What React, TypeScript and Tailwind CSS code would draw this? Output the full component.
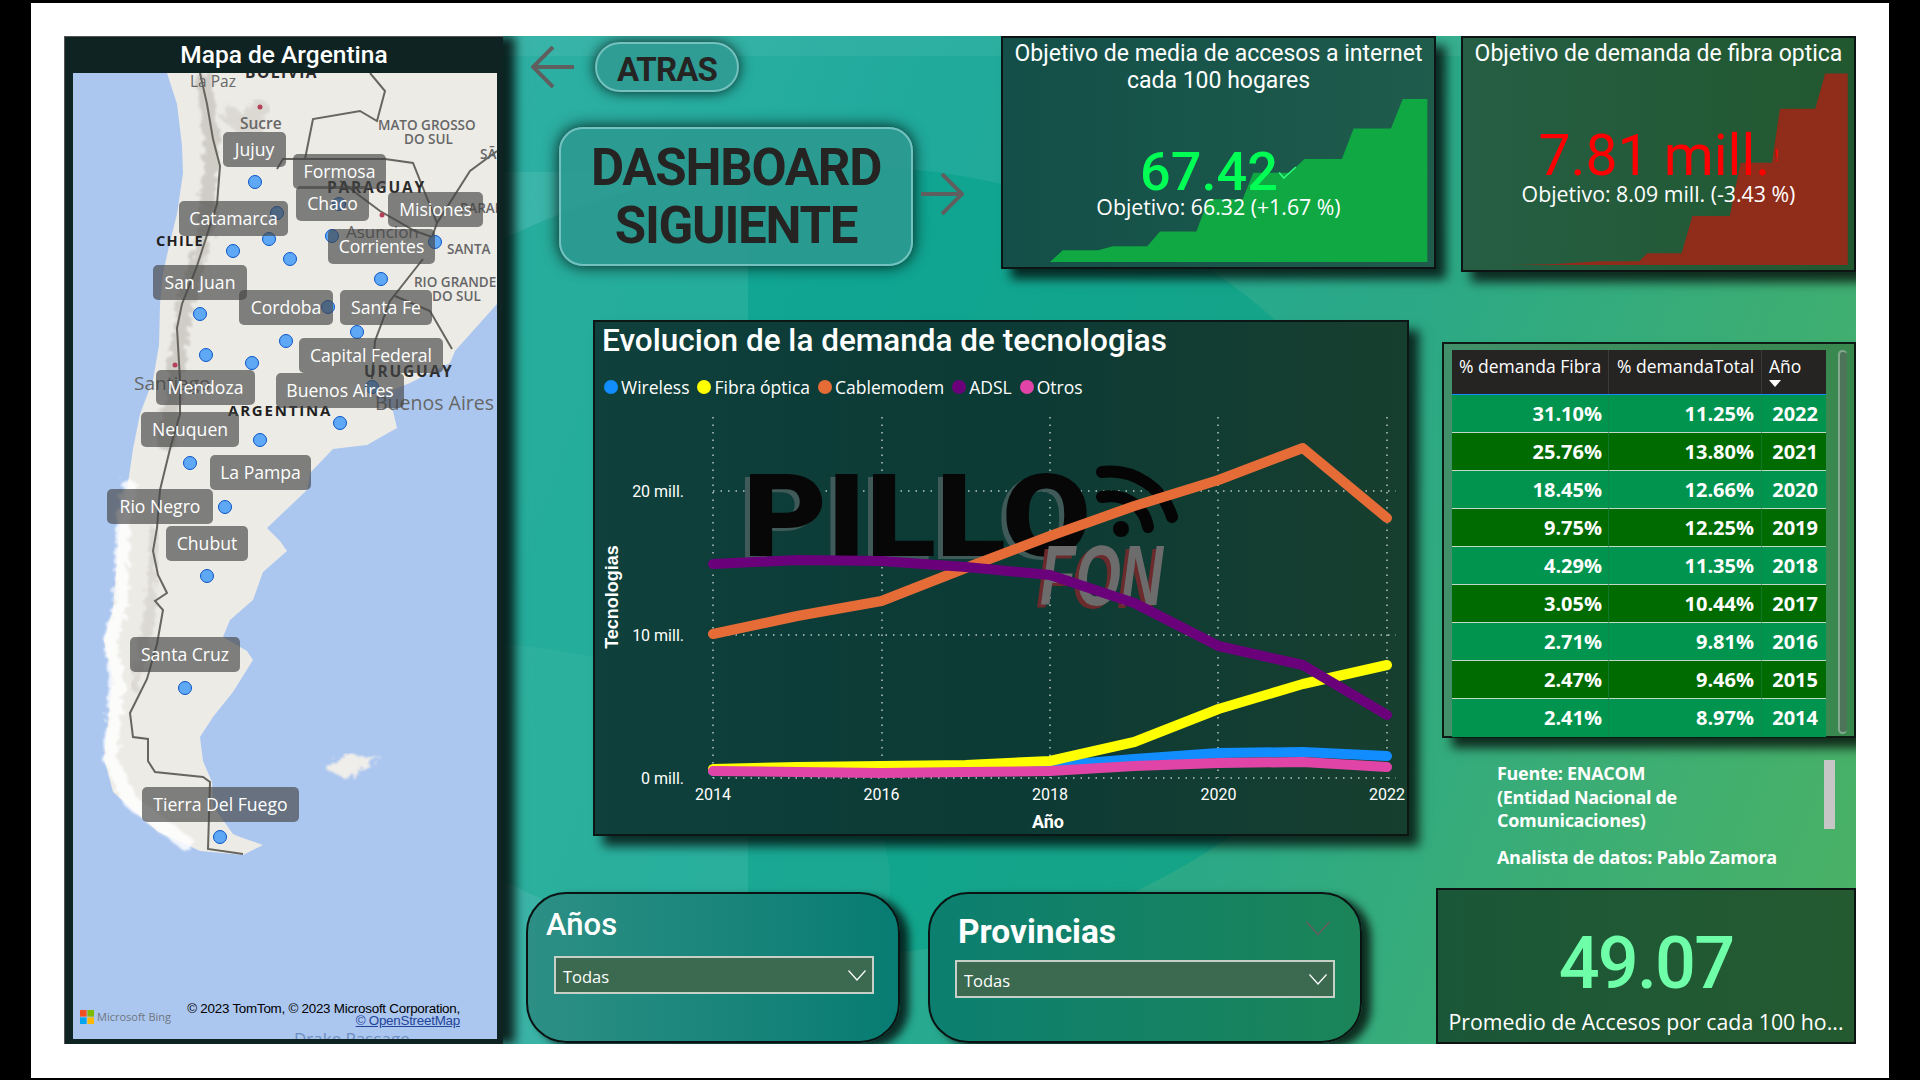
import React from 'react';

const pins: [number, number][] = [
  [255, 181], [277, 212], [339, 203], [269, 238], [233, 250], [332, 235], [290, 258], [435, 241],
  [381, 278], [200, 313], [328, 306], [357, 331], [286, 340], [206, 354], [252, 362], [372, 386],
  [340, 422], [260, 439], [190, 462], [225, 506], [207, 575], [185, 687], [220, 836],
];

// x, y, w of each province label, in page pixels
const labels: { name: string; x: number; y: number; w: number }[] = [
  { name: 'Jujuy', x: 223, y: 131, w: 63 },
  { name: 'Formosa', x: 293, y: 153, w: 93 },
  { name: 'Chaco', x: 296, y: 185, w: 73 },
  { name: 'Catamarca', x: 179, y: 200, w: 109 },
  { name: 'Misiones', x: 388, y: 191, w: 95 },
  { name: 'Corrientes', x: 328, y: 228, w: 107 },
  { name: 'San Juan', x: 153, y: 264, w: 94 },
  { name: 'Cordoba', x: 239, y: 289, w: 94 },
  { name: 'Santa Fe', x: 340, y: 289, w: 92 },
  { name: 'Capital Federal', x: 299, y: 337, w: 144 },
  { name: 'Mendoza', x: 156, y: 369, w: 99 },
  { name: 'Buenos Aires', x: 276, y: 372, w: 128 },
  { name: 'Neuquen', x: 141, y: 411, w: 98 },
  { name: 'La Pampa', x: 210, y: 454, w: 101 },
  { name: 'Rio Negro', x: 107, y: 488, w: 106 },
  { name: 'Chubut', x: 166, y: 525, w: 82 },
  { name: 'Santa Cruz', x: 130, y: 636, w: 110 },
  { name: 'Tierra Del Fuego', x: 142, y: 786, w: 157 },
];

const land =
  '167,72 177,103 182,145 183,172 177,213 170,241 163,272 160,303 159,344 153,379 140,413 133,448 127,489 120,527 117,561 113,609 104,640 113,678 104,757 113,791 157,830 200,850 243,854 263,844 240,836 233,833 213,805 212,781 203,760 200,736 213,716 233,691 253,659 247,650 223,636 230,619 253,599 263,571 287,550 280,540 267,527 307,489 310,472 333,448 367,444 397,427 393,410 375,396 410,382 450,362 455,350 497,303 497,72';

const border =
  '200,72 207,103 213,138 220,165 217,203 207,234 197,265 182,303 177,327 180,379 180,413 170,448 160,489 157,527 153,550 158,574 167,592 155,600 163,609 157,643 147,678 135,702 130,712 133,736 148,738 148,760 155,771 203,776 210,781 208,848 243,853';

const lineX = (i: number) => 713 + i * 84.25;
const series: { color: string; ys: number[] }[] = [
  { color: '#118dff', ys: [771, 771, 771, 770, 766, 759, 753, 752, 756] },
  { color: '#ffff00', ys: [769, 767, 766, 765, 761, 742, 709, 684, 665] },
  { color: '#e66c37', ys: [634, 616, 601, 568, 536, 506, 480, 448, 518] },
  { color: '#6b007b', ys: [564, 560, 561, 567, 575, 603, 646, 665, 715] },
  { color: '#e044a7', ys: [771, 772, 773, 772, 771, 766, 763, 762, 767] },
];

const legend = [
  { name: 'Wireless', color: 'bg-[#118dff]' },
  { name: 'Fibra óptica', color: 'bg-[#ffff00]' },
  { name: 'Cablemodem', color: 'bg-[#e66c37]' },
  { name: 'ADSL', color: 'bg-[#6b007b]' },
  { name: 'Otros', color: 'bg-[#e044a7]' },
];

const rows = [
  ['31.10%', '11.25%', '2022'],
  ['25.76%', '13.80%', '2021'],
  ['18.45%', '12.66%', '2020'],
  ['9.75%', '12.25%', '2019'],
  ['4.29%', '11.35%', '2018'],
  ['3.05%', '10.44%', '2017'],
  ['2.71%', '9.81%', '2016'],
  ['2.47%', '9.46%', '2015'],
  ['2.41%', '8.97%', '2014'],
];

const din = '[font-family:Roboto,sans-serif]';
const segoe = "[font-family:'Open_Sans',sans-serif]";

const MapBase: React.FC = () => (
  <svg viewBox="73 72 424 966" className="absolute inset-0 w-full h-full">
    <defs>
      <filter id="rough" x="-20%" y="-5%" width="140%" height="110%">
        <feTurbulence type="fractalNoise" baseFrequency="0.14" numOctaves="3" seed="4" />
        <feDisplacementMap in="SourceGraphic" scale="14" />
        <feGaussianBlur stdDeviation="0.8" />
      </filter>
    </defs>
    <rect x="73" y="72" width="424" height="966" fill="#abc6ef" />
    <polygon points={land} fill="#ecebe6" />
    <polygon points="327,765 345,755 380,754 362,770 350,778 330,772" fill="#f0eeea" filter="url(#rough)" />
    <polyline points="130,480 124,527 120,609 110,640 118,678 110,757 130,800 190,845" fill="none" stroke="#ffffff" strokeWidth="14" opacity="0.85" filter="url(#rough)" />
    <polyline points="203,72 212,138 205,234 185,303 175,379 165,448" fill="none" stroke="#bdbab2" strokeWidth="16" opacity="0.6" filter="url(#rough)" />
    <polyline points="155,527 150,609 135,690" fill="none" stroke="#d5d2cb" strokeWidth="10" opacity="0.7" filter="url(#rough)" />
    <polyline points="225,110 250,130 262,100" fill="none" stroke="#cfccc5" strokeWidth="18" opacity="0.55" filter="url(#rough)" />
    <g fill="none" stroke="#66665f" strokeWidth="2">
      <polyline points={border} />
      <polyline points="277,168 283,158 305,158 313,118 360,110 377,120 385,90 370,72" />
      <polyline points="305,158 385,158 413,162 425,192 437,222 432,236 415,230 380,210 360,195 340,180" />
      <polyline points="437,222 470,170 497,150" />
      <polyline points="423,258 390,300 375,340 372,378" />
      <polyline points="395,295 430,310 452,348" />
    </g>
    <circle cx="260" cy="106" r="2.5" fill="#b5405a" />
    <circle cx="382" cy="214" r="2.5" fill="#b5405a" />
    <circle cx="175" cy="364" r="2.5" fill="#b5405a" />
    <g className="[font-family:'Open_Sans',sans-serif]" fill="#666666" fontSize="15.5">
      <text x="190" y="86">La Paz</text>
      <text x="245" y="77" fontWeight="700" fill="#2c2c2c" letterSpacing="1.5">BOLIVIA</text>
      <text x="240" y="128" fontWeight="600">Sucre</text>
      <text x="378" y="129" fontSize="13.5" fontWeight="600">MATO GROSSO</text>
      <text x="404" y="143" fontSize="13.5" fontWeight="600">DO SUL</text>
      <text x="480" y="158" fontSize="13.5" fontWeight="600">SÃ</text>
      <text x="327" y="192" fontSize="15.5" fontWeight="700" fill="#2c2c2c" letterSpacing="1.8">PARAGUAY</text>
      <text x="460" y="212" fontSize="13.5" fontWeight="600">PARAN</text>
      <text x="346" y="237" fontSize="17">Asuncion</text>
      <text x="156" y="245" fontSize="14.5" fontWeight="700" fill="#1f1f1f" letterSpacing="1.3">CHILE</text>
      <text x="447" y="253" fontSize="13.5" fontWeight="600">SANTA</text>
      <text x="414" y="286" fontSize="13.5" fontWeight="600">RIO GRANDE</text>
      <text x="432" y="300" fontSize="13.5" fontWeight="600">DO SUL</text>
      <text x="364" y="376" fontSize="15.5" fontWeight="700" fill="#2c2c2c" letterSpacing="1.8">URUGUAY</text>
      <text x="134" y="389" fontSize="19">Santiago</text>
      <text x="228" y="415" fontSize="15" fontWeight="700" fill="#1f1f1f" letterSpacing="1.8">ARGENTINA</text>
      <text x="375" y="409" fontSize="19.5">Buenos Aires</text>
      <text x="294" y="1044" fontSize="17" fill="#6f8fbf">Drake Passage</text>
    </g>
  </svg>
);

const ArgentinaMap: React.FC = () => (
  <div className="w-[439px] h-[1008px] shrink-0 bg-[#0f2323] border-l border-t border-[#555] pt-[36px] pl-[8px] pr-[10px] shadow-[12px_0_10px_rgba(0,0,0,0.8)] relative">
    <div className={`absolute left-0 right-0 top-0 h-[36px] flex items-center justify-center text-white text-[24.5px] font-medium ${din}`}>Mapa de Argentina</div>
    <div className="relative w-[424px] h-[966px] overflow-hidden">
      <MapBase />
      {pins.map(([x, y], i) => (
        <div
          key={i}
          className="absolute w-[14px] h-[14px] rounded-full bg-[#5ea8f5] border-[1.5px] border-[#0a55c8]"
          style={{ left: x - 80, top: y - 79 }}
        />
      ))}
      {labels.map(l => (
        <div
          key={l.name}
          className={`absolute h-[35px] rounded-[5px] bg-[#444444]/65 text-white text-[17.6px] flex items-center justify-center ${segoe}`}
          style={{ left: l.x - 73, top: l.y - 72, width: l.w }}
        >
          {l.name}
        </div>
      ))}
      <div className="absolute left-[7px] bottom-[14px] flex items-center gap-[3px]">
        <svg viewBox="0 0 14 14" className="w-[14px] h-[14px]">
          <rect x="0" y="0" width="6.6" height="6.6" fill="#f25022" />
          <rect x="7.4" y="0" width="6.6" height="6.6" fill="#7fba00" />
          <rect x="0" y="7.4" width="6.6" height="6.6" fill="#00a4ef" />
          <rect x="7.4" y="7.4" width="6.6" height="6.6" fill="#ffb900" />
        </svg>
        <span className={`text-[11px] text-[#6f7680] ${segoe}`}>Microsoft Bing</span>
      </div>
      <div className="absolute right-[37px] bottom-[12px] text-right text-[13.4px] leading-[12px] tracking-[-0.25px] text-black [font-family:'Liberation_Sans',sans-serif]">
        <div>© 2023 TomTom, © 2023 Microsoft Corporation,</div>
        <div className="underline text-[#22449a]">© OpenStreetMap</div>
      </div>
    </div>
  </div>
);

const Background: React.FC = () => (
  <svg viewBox="64 36 1792 1008" className="absolute inset-0 w-full h-full">
    <ellipse cx="830" cy="560" rx="560" ry="395" fill="#00a088" opacity="0.5" />
    <rect x="503" y="172" width="245" height="872" fill="#ffffff" opacity="0.08" />
    <rect x="503" y="36" width="1353" height="20" fill="#ffffff" opacity="0.06" />
    <ellipse cx="420" cy="880" rx="470" ry="240" fill="#ffffff" opacity="0.04" />
  </svg>
);

const Arrow: React.FC<{ flip?: boolean }> = ({ flip }) => (
  <svg viewBox="0 0 43 42" className={`w-[43px] h-[42px] ${flip ? '-scale-x-100' : ''}`}>
    <path d="M43 21H2M22 1 2 21l20 20" fill="none" stroke="#5f5f5f" strokeWidth="4" />
  </svg>
);

const Chevron: React.FC<{ className: string }> = ({ className }) => (
  <svg viewBox="0 0 18 11" className={className}>
    <path d="M.5.5 9 10 17.5.5" fill="none" stroke="currentColor" strokeWidth="1.2" />
  </svg>
);

const Nav: React.FC = () => (
  <div className="w-[498px] shrink-0 pl-[28px] pt-[6px]">
    <div className="flex items-center">
      <Arrow />
      <div className={`ml-[21px] w-[144px] h-[50px] pt-[5px] rounded-full bg-[#2f9d94] border-2 border-[#74c2c0] shadow-[0_0_14px_rgba(0,0,0,0.8)] flex items-center justify-center text-[#252423] text-[33px] font-bold tracking-tight ${din}`}>ATRAS</div>
    </div>
    <div className="flex items-center mt-[35px] ml-[28px]">
      <div className={`w-[354px] h-[139px] rounded-[24px] bg-[#2c9990]/90 border-2 border-[#74c2c0] shadow-[0_0_16px_rgba(0,0,0,0.85)] flex flex-col items-center justify-center text-[#252423] text-[51px] leading-[58px] font-bold tracking-tight ${din}`}>
        <span>DASHBOARD</span>
        <span>SIGUIENTE</span>
      </div>
      <div className="ml-[8px] mb-[6px]"><Arrow flip /></div>
    </div>
  </div>
);

const KpiGoal: React.FC = () => (
  <div className="relative w-[435px] h-[233px] shrink-0 border-2 border-[#0c1414] bg-[linear-gradient(90deg,#134f48,#1f5c4c)] shadow-[10px_10px_10px_rgba(0,0,0,0.75)] text-white text-center">
    <svg viewBox="1001 36 435 233" className="absolute inset-0 w-full h-full">
      <polygon points="1047,264 1060,252 1096,252 1111,248 1146,248 1159,233 1196,233 1208,200 1243,200 1254,173 1291,173 1306,159 1344,159 1356,128 1394,128 1406,98 1431,98 1431,264" fill="#0fa843" />
    </svg>
    <div className="relative">
      <div className={`pt-[2px] text-[23px] leading-[27px] ${din}`}>Objetivo de media de accesos a internet<br />cada 100 hogares</div>
      <div className={`mt-[52px] h-[50px] flex items-center justify-center text-[54px] font-medium text-[#00ff55] ${din}`}>
        67.42
        <svg viewBox="0 0 20 14" className="w-[19px] h-[13px] mt-[2px]"><path d="M1 7l5 6L19 1" fill="none" stroke="#2dff7c" strokeWidth="1.6" /></svg>
      </div>
      <div className={`-mt-[5px] text-[21.3px] ${segoe}`}>Objetivo: 66.32 (+1.67 %)</div>
    </div>
  </div>
);

const KpiFiber: React.FC = () => (
  <div className="relative w-[395px] h-[236px] ml-[25px] shrink-0 border-2 border-[#0c1414] bg-[linear-gradient(90deg,#255e44,#22582f)] shadow-[10px_10px_10px_rgba(0,0,0,0.75)] text-white text-center">
    <svg viewBox="1461 36 395 236" className="absolute inset-0 w-full h-full">
      <polygon points="1504,267 1553,266 1598,263 1639,263 1647,255 1682,255 1693,217 1731,217 1742,163 1774,163 1782,108 1818,108 1828,72 1851,72 1851,267" fill="#8f2c1a" />
    </svg>
    <div className="relative">
      <div className={`pt-[2px] text-[23px] leading-[27px] ${din}`}>Objetivo de demanda de fibra optica</div>
      <div className={`mt-[64px] h-[50px] flex items-center justify-center text-[57px] text-[#ff0000] ${din}`}>
        7.81 mill.
        <span className="ml-[4px] text-[16px]">!</span>
      </div>
      <div className={`-mt-[3px] text-[21.3px] ${segoe}`}>Objetivo: 8.09 mill. (-3.43 %)</div>
    </div>
  </div>
);

const DemandChart: React.FC = () => (
  <div className="w-[816px] h-[516px] ml-[90px] mt-[48px] shrink-0 border-2 border-[#0b1615] bg-[linear-gradient(90deg,#0f403c,#0c3a35_50%,#173f2f)] shadow-[10px_10px_10px_rgba(0,0,0,0.75)] text-white flex flex-col">
    <div className={`pl-[7px] pt-[1px] text-[31.5px] leading-[36px] font-medium ${din}`}>Evolucion de la demanda de tecnologias</div>
    <div className={`flex items-center gap-[8px] pl-[9px] mt-[16px] h-[24px] text-[17.5px] ${segoe}`}>
      {legend.map(item => (
        <div key={item.name} className="flex items-center">
          <span className={`w-[14px] h-[14px] rounded-full mr-[3px] ${item.color}`} />
          {item.name}
        </div>
      ))}
    </div>
    <svg viewBox="595 405 812 429" className="w-[812px] h-[429px] mt-[6px] shrink-0">
      {[713, 882, 1050, 1218, 1387].map(x => (
        <line key={x} x1={x} x2={x} y1="417" y2="778" stroke="#b8c8c4" strokeWidth="1.5" strokeDasharray="1.5 6" />
      ))}
      {[491, 635, 778].map(y => (
        <line key={y} x1="713" x2="1396" y1={y} y2={y} stroke="#b8c8c4" strokeWidth="1.5" strokeDasharray="1.5 6" />
      ))}
      <g>
        <text x="738" y="559" fontSize="115" fontWeight="900" fill="#3f5a58" textLength="348" lengthAdjust="spacingAndGlyphs" className="[font-family:Roboto,sans-serif]">PILLO</text>
        <text x="743" y="556" fontSize="115" fontWeight="900" fill="#070707" textLength="348" lengthAdjust="spacingAndGlyphs" className="[font-family:Roboto,sans-serif]">PILLO</text>
        <path d="M1102 472c34-4 62 18 70 45M1102 497c22-4 42 8 46 30" fill="none" stroke="#050505" strokeWidth="12" strokeLinecap="round" />
        <circle cx="1121" cy="529" r="8" fill="#050505" />
        <text x="1036" y="608" fontSize="86" fontWeight="700" fontStyle="italic" fill="#6b2a2c" textLength="123" lengthAdjust="spacingAndGlyphs" className="[font-family:'Liberation_Sans',sans-serif]">FON</text>
        <text x="1040" y="605" fontSize="86" fontWeight="700" fontStyle="italic" fill="#6c6c6c" textLength="123" lengthAdjust="spacingAndGlyphs" className="[font-family:'Liberation_Sans',sans-serif]">FON</text>
      </g>
      {series.map(s => (
        <polyline
          key={s.color}
          points={s.ys.map((y, i) => `${lineX(i)},${y}`).join(' ')}
          fill="none"
          stroke={s.color}
          strokeWidth="10"
          strokeLinecap="round"
          strokeLinejoin="round"
        />
      ))}
      <g fill="#ffffff" fontSize="16" className="[font-family:Roboto,sans-serif]">
        <text x="684" y="497" textAnchor="end">20 mill.</text>
        <text x="684" y="641" textAnchor="end">10 mill.</text>
        <text x="684" y="784" textAnchor="end">0 mill.</text>
        {[2014, 2016, 2018, 2020, 2022].map((y, i) => (
          <text key={y} x={713 + i * 168.5} y="800" textAnchor="middle">{y}</text>
        ))}
        <text x="1048" y="828" textAnchor="middle" fontSize="18" fontWeight="700">Año</text>
        <text x="0" y="0" textAnchor="middle" fontSize="18" fontWeight="700" transform="translate(618 597) rotate(-90)" className="[font-family:'Liberation_Sans',sans-serif]">Tecnologias</text>
      </g>
    </svg>
  </div>
);

const DemandTable: React.FC = () => (
  <div className="w-[414px] h-[396px] mt-[70px] border-2 border-[#0e1a14] bg-[linear-gradient(90deg,#41906a,#38884e)] shadow-[10px_10px_10px_rgba(0,0,0,0.75)] pt-[6px] pl-[8px] flex text-white">
    <div className={`w-[374px] ${segoe}`}>
      <div className="grid grid-cols-[157px_153px_64px] h-[45px] pt-[2px] bg-[#252423] border-b border-[#118dff] text-[17.5px] leading-[28px]">
        <div className="pl-[7px] border-r border-[#3a3a38] -mt-[2px] pt-[2px]">% demanda Fibra</div>
        <div className="pl-[8px] border-r border-[#3a3a38] -mt-[2px] pt-[2px]">% demandaTotal</div>
        <div className="pl-[7px] relative">
          Año
          <span className="absolute left-[7px] top-[28px] w-0 h-0 border-x-[6px] border-x-transparent border-t-[7px] border-t-white" />
        </div>
      </div>
      {rows.map((row, i) => (
        <div
          key={row[2]}
          className={`grid grid-cols-[157px_153px_64px] h-[38px] text-[20px] font-bold text-right leading-[38px] border-b border-[#c4d8c8] last:border-b-0 ${i % 2 === 0 ? 'bg-[#00944f]' : 'bg-[#006b00]'}`}
        >
          <div className="pr-[6px] border-r border-[#1b7f4a]/60">{row[0]}</div>
          <div className="pr-[7px] border-r border-[#1b7f4a]/60">{row[1]}</div>
          <div className="pr-[8px]">{row[2]}</div>
        </div>
      ))}
    </div>
    <div className="ml-[12px] w-[9px] h-[384px] rounded-[5px] bg-[#4d7458] border-y-2 border-l-2 border-[#9dbfa5]/70" />
  </div>
);

const Credits: React.FC = () => (
  <div className="relative ml-[55px] mt-[24px] w-[359px] text-white text-[18px] font-bold leading-[23.5px] [font-family:'Open_Sans',sans-serif] tracking-[-0.3px]">
    <p>Fuente: ENACOM<br />(Entidad Nacional de<br />Comunicaciones)</p>
    <p className="mt-[13px]">Analista de datos: Pablo Zamora</p>
    <div className="absolute right-[21px] -top-[2px] w-[11px] h-[69px] bg-[#c6c6c6]" />
  </div>
);

const Slicer: React.FC<{ title: string; wide?: boolean }> = ({ title, wide }) => (
  <div
    className={`relative h-[151px] mt-[4px] shrink-0 rounded-[40px] border-2 border-[#0a1312] shadow-[9px_5px_8px_rgba(0,0,0,0.75)] text-white ${
      wide ? 'w-[434px] ml-[28px] bg-[linear-gradient(90deg,#0c7f70,#1b8458)] pl-[28px] pt-[19px]' : 'w-[374px] ml-[23px] bg-[linear-gradient(90deg,#2d8f85,#087c72)] pl-[18px] pt-[12px]'
    }`}
  >
    <div className={`${din} ${wide ? 'text-[33.5px] font-bold leading-[38px]' : 'text-[31px] font-medium leading-[38px]'}`}>{title}</div>
    {wide && <Chevron className="absolute right-[28px] top-[27px] w-[28px] h-[15px] text-[#5f5f5f]" />}
    <div
      className={`flex items-center justify-between bg-[#3b6a50] border-2 border-[#c6d0c6] h-[38px] ${segoe} text-[16.5px] ${
        wide ? 'w-[380px] -ml-[3px] mt-[9px]' : 'w-[320px] ml-[8px] mt-[12px]'
      }`}
    >
      <span className="pl-[7px] pt-[5px]">Todas</span>
      <Chevron className="w-[18px] h-[11px] mr-[6px]" />
    </div>
  </div>
);

const KpiAverage: React.FC = () => (
  <div className="w-[420px] h-[156px] ml-[74px] shrink-0 border-2 border-[#0c1414] bg-[linear-gradient(90deg,#1a5738,#255a30)] text-center">
    <div className={`mt-[41px] h-[66px] flex items-center justify-center text-[72px] tracking-tight text-[#6effa8] font-medium ${din}`}>49.07</div>
    <div className={`mt-[9px] text-[21.3px] text-white ${segoe}`}>Promedio de Accesos por cada 100 ho...</div>
  </div>
);

const App: React.FC = () => {
  return (
    <div className="w-[1920px] h-[1080px] bg-black pt-[3px] pl-[31px] pr-[31px] pb-[2px]">
      <div className="h-[1075px] bg-white pt-[33px] px-[33px]">
        <div className="relative w-[1792px] h-[1008px] flex overflow-hidden bg-[linear-gradient(110deg,#3cb6aa,#1faa9c_42%,#2ca985_68%,#4cb263)]">
          <Background />
          <ArgentinaMap />
          <div className="relative flex-1 flex flex-col">
            <div className="flex h-[236px]">
              <Nav />
              <KpiGoal />
              <KpiFiber />
            </div>
            <div className="flex h-[616px]">
              <DemandChart />
              <div className="ml-[33px]">
                <DemandTable />
                <Credits />
              </div>
            </div>
            <div className="flex h-[156px]">
              <Slicer title="Años" />
              <Slicer title="Provincias" wide />
              <KpiAverage />
            </div>
          </div>
        </div>
      </div>
    </div>
  );
};

export default App;
